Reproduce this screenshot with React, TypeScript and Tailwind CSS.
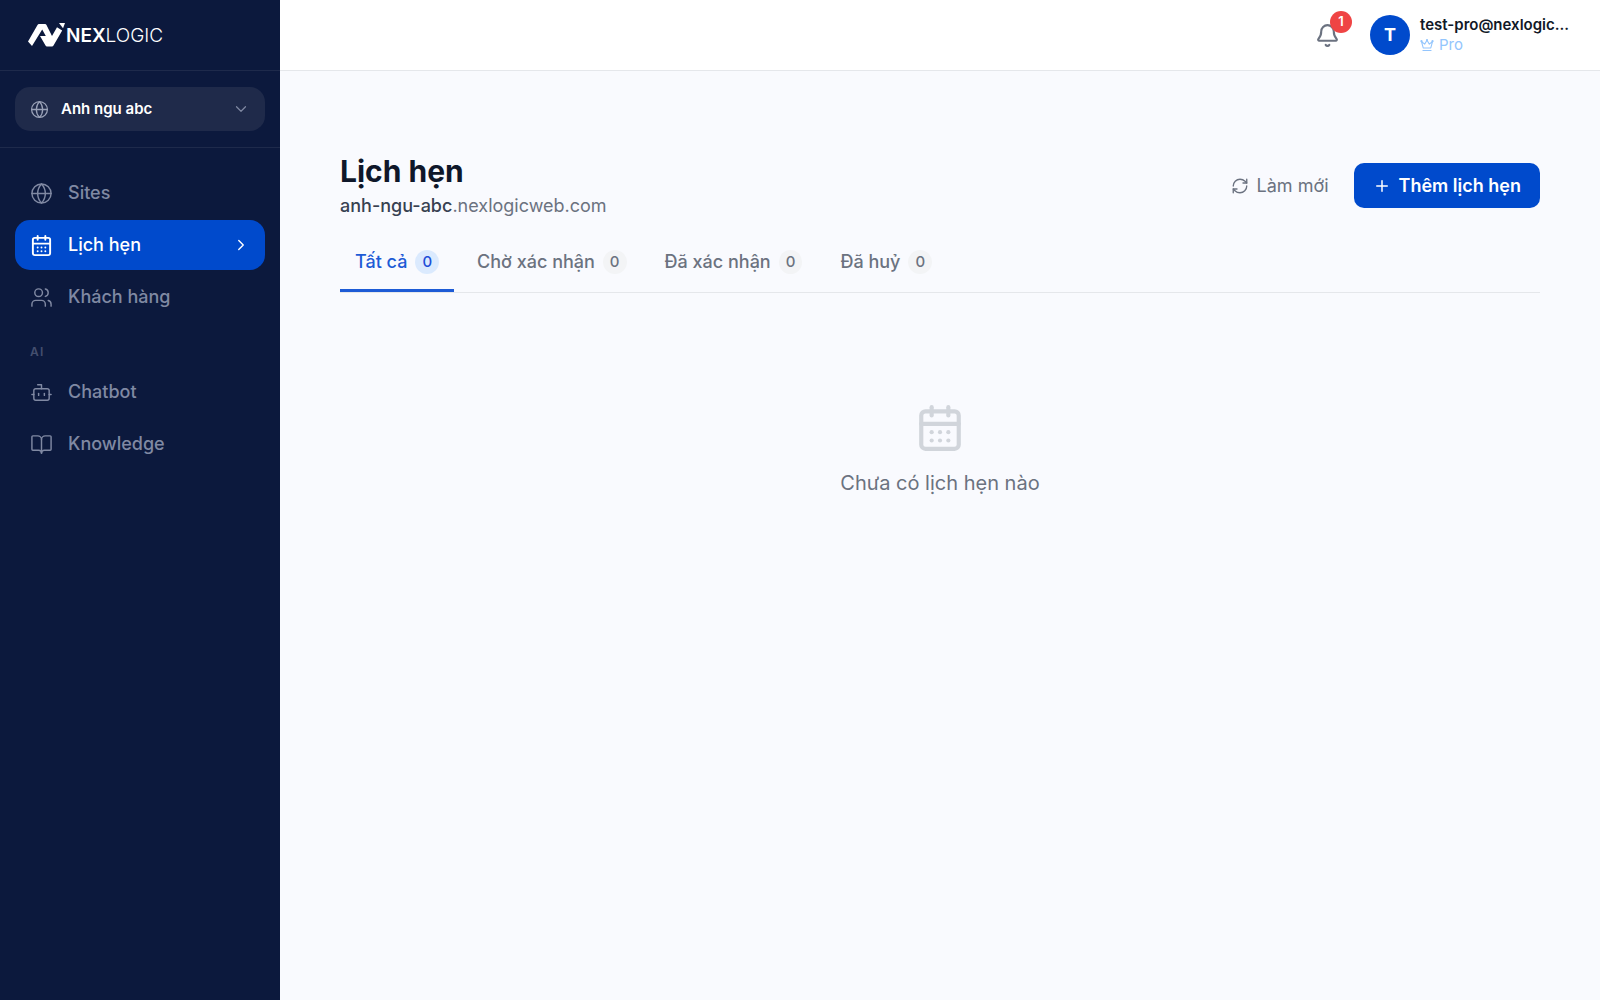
import React from "react";
import { Globe, ChevronDown, ChevronRight, CalendarDays, Users, Bot, BookOpen, Bell, RefreshCw, Plus } from "lucide-react";

function Logo() {
  return (
    <div className="flex items-center text-white">
      <svg width="38" height="24" viewBox="0 0 38 24" fill="currentColor" aria-hidden="true">
        <path d="M0 18.500 L9.500 2 Q10 1 11 1 H17 Q18 1 18.500 2 L24 13 L29 4.200 L34.200 7.500 L25.500 22.500 Q25 23.500 24 23.500 H19 Q18 23.500 17.500 22.500 L12 13 H17.800 L14.200 6.500 L4 23 Z" />
        <path d="M31 0 H37 L35 5.200 Z" />
      </svg>
      <span className="pt-0.5 text-[19px] leading-6">
        <b className="font-semibold">NEX</b>
        <span className="font-light">LOGIC</span>
      </span>
    </div>
  );
}

function Crown() {
  return (
    <svg width="14" height="14" viewBox="0 0 24 24" fill="none" stroke="currentColor" strokeWidth="1.800" strokeLinecap="round" strokeLinejoin="round" aria-hidden="true">
      <path d="m2.500 6 3 11h13l3-11-5.500 4.500L12 4l-4 6.500zM5 21.500h14" />
      <circle cx="2.500" cy="5.500" r="1" />
      <circle cx="12" cy="3.500" r="1" />
      <circle cx="21.500" cy="5.500" r="1" />
    </svg>
  );
}

function NavItem({ icon: Icon, label, active = false }: { icon: React.ElementType; label: string; active?: boolean }) {
  return (
    <a
      href="#"
      aria-current={active ? "page" : undefined}
      className={
        "flex h-[50px] items-center gap-[15px] rounded-[15px] px-[15px] text-lg font-medium " +
        (active ? "bg-[#004acc] text-white" : "text-[#8089a3]")
      }
    >
      <Icon size={23} strokeWidth={active ? 2 : 1.5} />
      <span className="flex-1">{label}</span>
      {active && <ChevronRight size={18} strokeWidth={1.8} />}
    </a>
  );
}

const tabs = [
  { label: "Tất cả", count: 0 },
  { label: "Chờ xác nhận", count: 0 },
  { label: "Đã xác nhận", count: 0 },
  { label: "Đã huỷ", count: 0 },
];

export default function App() {
  return (
    <div className="flex min-h-screen bg-[#f9fafe] font-['Inter',sans-serif]">
      <aside className="w-[280px] shrink-0 bg-[#0c193d]">
        <div className="flex h-[71px] items-center border-b border-[#1e2a4b] px-7">
          <Logo />
        </div>
        <div className="border-b border-[#1e2a4b] px-[15px] py-4">
          <button className="flex h-11 w-full items-center gap-3 rounded-[15px] bg-[#1f2a4a] px-[15px] text-left text-white">
            <Globe size={19} strokeWidth={1.6} className="text-[#9aa2b8]" />
            <span className="flex-1 text-[15px] font-semibold">Anh ngu abc</span>
            <ChevronDown size={18} strokeWidth={1.6} className="text-[#8089a3]" />
          </button>
        </div>
        <nav className="flex flex-col gap-0.5 px-[15px] pt-5">
          <NavItem icon={Globe} label="Sites" />
          <NavItem icon={CalendarDays} label="Lịch hẹn" active />
          <NavItem icon={Users} label="Khách hàng" />
          <h2 className="px-[15px] pt-5 pb-[5px] text-xs leading-4 font-semibold tracking-widest text-[#444f6e]">AI</h2>
          <NavItem icon={Bot} label="Chatbot" />
          <NavItem icon={BookOpen} label="Knowledge" />
        </nav>
      </aside>

      <div className="flex min-w-0 flex-1 flex-col">
        <header className="flex h-[71px] items-center justify-end gap-5 border-b border-[#e5e7eb] bg-white px-[30px]">
          <button className="relative p-2.5 text-[#6b7280]" aria-label="Thông báo">
            <Bell size={25} strokeWidth={2} />
            <span className="absolute -top-0.5 -right-0.5 flex size-[22px] items-center justify-center rounded-full bg-[#ef4444] text-[13px] font-semibold text-white">1</span>
          </button>
          <button className="flex items-center gap-2.5 text-left">
            <span className="flex size-10 items-center justify-center rounded-full bg-[#004acc] text-lg font-bold text-white">T</span>
            <span className="block min-w-[150px]">
              <span className="block text-[15px] leading-5 font-semibold whitespace-nowrap text-[#111827]">test-pro@nexlogic...</span>
              <span className="flex items-center gap-[5px] text-[15px] leading-5 text-[#93c5fd]">
                <Crown />
                Pro
              </span>
            </span>
          </button>
        </header>

        <main className="px-15 pt-20">
          <div className="flex items-center justify-between">
            <div>
              <h1 className="text-[30px] leading-10 font-bold text-[#0f172a]">Lịch hẹn</h1>
              <p className="mt-px text-lg leading-7 text-[#6b7280]">
                <span className="font-medium text-[#374151]">anh-ngu-abc</span>.nexlogicweb.com
              </p>
            </div>
            <div className="flex items-center gap-[25px]">
              <button className="flex items-center gap-2 text-lg text-[#6b7280]">
                <RefreshCw size={18} strokeWidth={1.8} />
                Làm mới
              </button>
              <button className="flex h-[45px] items-center gap-2 rounded-[10px] bg-[#004acc] px-[19px] text-lg font-semibold text-white">
                <Plus size={18} />
                Thêm lịch hẹn
              </button>
            </div>
          </div>

          <div role="tablist" className="mt-3 flex gap-2 border-b border-[#e5e7eb]">
            {tabs.map((t, i) => (
              <button
                key={t.label}
                role="tab"
                aria-selected={i === 0}
                className={
                  "flex h-[60px] items-center gap-2 border-b-3 px-[15px] pt-0.5 text-lg font-medium " +
                  (i === 0 ? "border-[#1d5bd6] text-[#1d5bd6]" : "border-transparent text-[#6b7280]")
                }
              >
                {t.label}
                <span
                  className={
                    "flex h-6 items-center justify-center rounded-full px-[7px] text-[15px] " +
                    (i === 0 ? "bg-[#dbeafe] text-[#1d4ed8]" : "bg-[#f3f4f6] text-[#6b7280]")
                  }
                >
                  {t.count}
                </span>
              </button>
            ))}
          </div>

          <section className="flex flex-col items-center gap-4 pt-[110px] text-[#6b7280]">
            <CalendarDays size={50} className="text-[#d1d5db]" />
            <p className="text-xl leading-7">Chưa có lịch hẹn nào</p>
          </section>
        </main>
      </div>
    </div>
  );
}
